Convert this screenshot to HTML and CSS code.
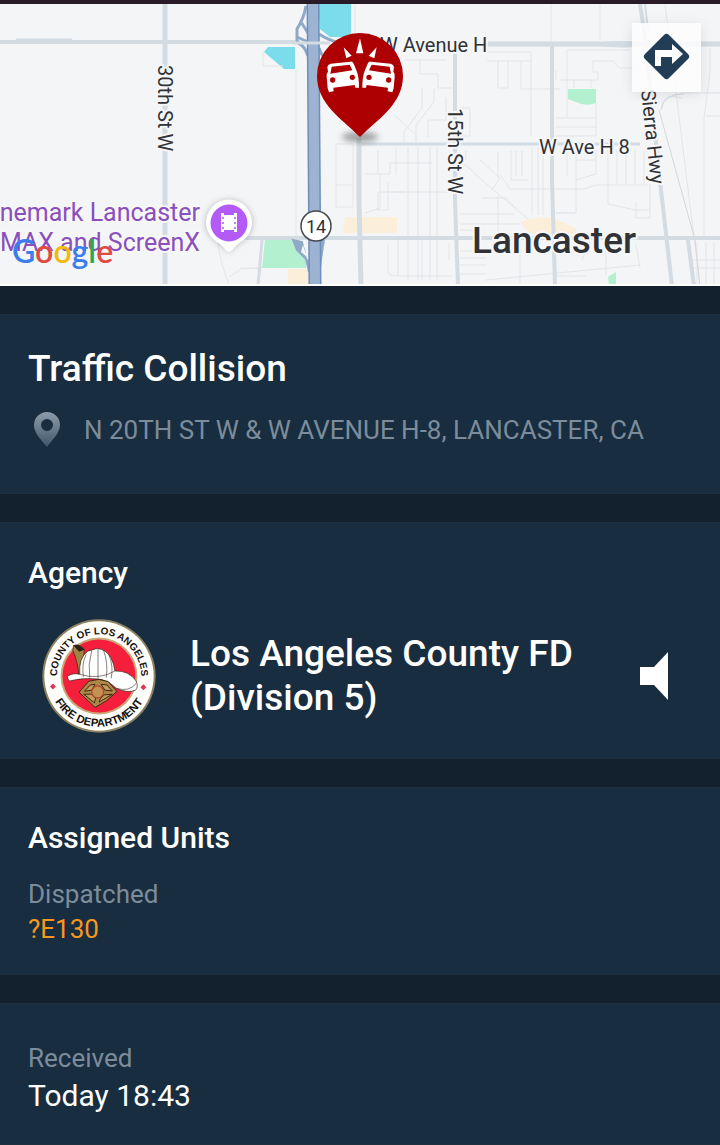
FILE: index.html
```html
<!DOCTYPE html>
<html lang="en">
<head>
<meta charset="utf-8">
<meta name="viewport" content="width=device-width, initial-scale=1">
<title>Traffic Collision</title>
<link rel="stylesheet" href="styles.css">
</head>
<body>
<main class="incident">
  <section class="map" aria-label="Incident map">
    <svg class="map-canvas" viewBox="0 4 720 282" role="img" aria-label="Map of Lancaster">
      <defs>
        <filter id="soft" x="-50%" y="-50%" width="200%" height="200%"><feGaussianBlur stdDeviation="3"/></filter>
      </defs>
      <rect y="4" width="720" height="282" fill="#f4f5f6"/>
      <!-- water, parks and commercial areas -->
      <path d="M318 4H351V32Q350 37 344 37H330L320 29Z" fill="#7bdcec"/>
      <path d="M268 47H295V69H284L264 52Z" fill="#7bdcec"/>
      <path d="M265 240H298L306 250V268H262Z" fill="#b2f0cf"/>
      <path d="M568 89H596V103Q586 107 576 102L568 99Z" fill="#b2f0cf"/>
      <path d="M608 277L616 272V286H609Z" fill="#b2f0cf"/>
      <path d="M345 217H397V233H343ZM288 269H310V286H288ZM520 222Q545 213 562 222L576 228V234H530Z" fill="#fbefda"/>
      <!-- side streets -->
      <g fill="none" stroke="#e2e5e9" stroke-width="1">
        <path d="M218 240Q219 260 229 284M229 277L241 269 260 268M240 268H262M296 70V236M263 52V66H283M355 4V38"/>
        <path d="M336 144H353V207M336 144V207H353M336 185H353M365 174H390V163H432M378 174V150M378 210V192H405M365 213 380 208V174M396 147V175M408 147V236M418 147V236M430 147V236M437 147V236M388 182V210H376M390 192H456"/>
        <path d="M405 60H446M420 60V74H438V88H454M422 88V108L404 132V144M434 88V102L416 125V142M394 115 415 134M446 97V120H428V138M458 108H470V136H448"/>
        <path d="M388 245V272Q389 276 397 276H452M398 240V276M408 240V280M418 240V280M422 240V280M430 240V280M437 240V280M449 243V260M460 251H486M460 258H486M460 265H486M460 274H486"/>
        <path d="M457 180V164Q463 160 477 176L528 219M480 160 500 178 492 190M466 150V160M498 152V178M511 150V180H528M516 150V176M522 150V176M532 147V215M538 147V215M543 147V215M500 175 510 189H584L595 185H648M482 198H506L516 209M460 214H514M460 224H520M460 230H475M498 196V236"/>
        <path d="M487 52H531M487 61H530M498 61V88H508V61M521 61V89H560M531 52V136M551 4V42M600 4V40M567 50V118M567 50H630M560 80H598V72H592M556 70V80M574 80V88M591 80V88M593 72V61H612L620 68H638M596 103V136M556 118H596M556 127H596M556 136H596"/>
        <path d="M567 150V176M576 150V213H556M576 180L596 174V150M576 160H596M608 150V204L635 210H650M617 150V184M626 150V184M635 150V184M644 150V184M650 184V218H636V202M576 213H556M486 280 640 265M520 243V286M556 276 586 276M588 245 582 260M606 245V275M636 245 640 268M665 4 700 286M710 48V72L704 118V240M704 93H720M680 93H720M661 108Q663 92 682 98M706 116H720M697 242V286M706 242V286M714 242V286M690 260H720M690 268H720"/>
      </g>
      <path d="M659 110L695 240 700 286M661 110Q664 93 684 94" fill="none" stroke="#d5d8dc" stroke-width="1"/>
      <!-- main streets -->
      <g fill="none" stroke="#d3dce3">
        <path d="M0 42H300" stroke-width="4"/>
        <path d="M16 41H72" stroke-width="5"/>
        <path d="M486 44H720" stroke-width="5"/>
        <path d="M590 44Q620 39 660 44Q620 50 590 44Z" fill="#d3dce3"/>
        <path d="M165 4V286" stroke-width="5"/>
        <path d="M222 238H720" stroke-width="4"/>
        <path d="M359 138V200L361 286" stroke-width="5"/>
        <path d="M359 144H640" stroke-width="3"/>
        <path d="M455 40V200L458 286" stroke-width="4"/>
        <path d="M552 46V180L555 286" stroke-width="4"/>
        <path d="M640 4L644 30L661 190L672 286" stroke-width="4"/>
        <path d="M645 4L648 30" stroke-width="2"/>
        <path d="M688 240L694 286" stroke-width="4"/>
        <path d="M262 240L258 286" stroke-width="3"/>
      </g>
      <!-- freeway with ramps -->
      <g fill="none" stroke="#91a9c9" stroke-width="3">
        <path d="M306 6Q304 18 297 29V42M297 37L308 42M301 22L308 33M319 34Q328 40 342 44M319 48Q322 58 332 66M298 43Q305 46 308 56"/>
        <path d="M293 240L302 242L309 272V262L297 250Z" fill="#91a9c9" stroke-width="2"/>
        <path d="M303 245L307 257L301 252Z" fill="#f4f5f6" stroke="none"/>
        <path d="M319 240H325Q322 258 320 276Z" fill="#91a9c9" stroke="none"/>
        <path d="M313 4L315 286" stroke="#6e8fbb" stroke-width="13"/>
        <path d="M313 4L315 286" stroke="#9cb3d2" stroke-width="10"/>
        <path d="M292 43H330" stroke="#d3dce3"/>
      </g>
      <!-- place and street names -->
      <g class="street">
        <text x="380" y="52">W Avenue H</text>
        <text x="539" y="154">W Ave H 8</text>
        <text transform="translate(158 65) rotate(90)">30th St W</text>
        <text transform="translate(448 108) rotate(90)">15th St W</text>
        <text transform="translate(641 90) rotate(84)">Sierra Hwy</text>
      </g>
      <text class="city" x="472" y="253">Lancaster</text>
      <g class="poi" text-anchor="end">
        <text x="200" y="221">nemark Lancaster</text>
        <text x="200" y="251">MAX and ScreenX</text>
      </g>
      <text class="brand" x="12" y="263"><tspan fill="#3b7ded">G</tspan><tspan fill="#e04a3f">o</tspan><tspan fill="#f2b90f">o</tspan><tspan fill="#3b7ded">g</tspan><tspan fill="#2da94f">l</tspan><tspan fill="#e04a3f">e</tspan></text>
      <!-- cinema marker -->
      <path d="M229 253C224 243 206 240 206 223A23 23 0 0 1 252 223C252 240 234 243 229 253Z" fill="#777" opacity=".5" filter="url(#soft)"/>
      <path d="M229 252Q227 252 224 248Q222 245 217 242A23 23 0 1 1 241 242Q236 245 234 248Q231 252 229 252Z" fill="#fff"/>
      <circle cx="229" cy="223" r="18.500" fill="#b45bf7"/>
      <path d="M221 213H224V215H234V213H237V232H234V230H224V232H221Z" fill="#fff"/>
      <path d="M223 217V219M223 222V224M223 227V229M235 217V219M235 222V224M235 227V229" stroke="#b45bf7" stroke-width="1.500"/>
      <!-- route shield -->
      <circle cx="316" cy="226" r="15" fill="#fff" stroke="#45494d" stroke-width="1.500"/>
      <text class="route" x="316" y="233" text-anchor="middle">14</text>
      <!-- incident marker -->
      <ellipse cx="360" cy="137" rx="18" ry="5" fill="#555" opacity=".55" filter="url(#soft)"/>
      <path d="M360 137C342 119 317 104 317 76A43 43 0 0 1 403 76C403 104 378 119 360 137Z" fill="#ad0003"/>
      <g transform="translate(300 20) scale(.33333)">
        <g id="car">
          <path d="M82 141Q83 133 92 131L151 125Q158 124 161 131L170 153Q177 170 177 203H166L164 195L100 203L101 214L87 217L83 205L80 170Q79 160 84 155Z" fill="#fff"/>
          <path d="M95 140L149 134L157 151L91 161Z" fill="#ad0003"/>
          <circle cx="98" cy="180" r="8" fill="#ad0003"/><circle cx="157" cy="172" r="8" fill="#ad0003"/>
        </g>
        <use href="#car" transform="translate(364 0) scale(-1 1)"/>
        <path d="M180 55L190 100H168ZM131 82L155 107L139 115ZM230 82L223 115L206 107Z" fill="#fff"/>
      </g>
      <path d="M0 285H720" stroke="#fff" stroke-width="2"/>
    </svg>
    <button class="directions" type="button" aria-label="Directions">
      <svg viewBox="0 0 69 69" width="69" height="69" aria-hidden="true">
        <path d="M32 12Q34.500 9.500 37 12L56 31Q58.500 33.500 56 36L37 55Q34.500 57.500 32 55L13 36Q10.500 33.500 13 31Z" fill="#213e56"/>
        <path d="M23 43V27H40V21L51 31L40 41V34H29V43Z" fill="#fff"/>
      </svg>
    </button>
  </section>

  <section class="card summary">
    <h1 class="title">Traffic Collision</h1>
    <p class="address">
      <svg class="place" viewBox="0 0 28 36" aria-hidden="true">
        <defs><linearGradient id="fade" x1="0" y1="0" x2="0" y2="1"><stop offset="0" stop-color="#8c9cab"/><stop offset="1" stop-color="#41566a"/></linearGradient></defs>
        <path fill="url(#fade)" fill-rule="evenodd" d="M15 0A13 13 0 0 1 28 13C28 21 20 28 15 35C9 28 2 21 2 13A13 13 0 0 1 15 0ZM15 7A6 6 0 1 0 15 19A6 6 0 1 0 15 7Z"/>
      </svg>
      <span>N 20TH ST W &amp; W AVENUE H-8, LANCASTER, CA</span>
    </p>
  </section>

  <section class="card agency">
    <h2 class="heading">Agency</h2>
    <div class="agency-row">
      <svg class="seal" viewBox="38 23 344 344" role="img" aria-label="Los Angeles County Fire Department seal">
        <defs>
          <path id="arc-top" d="M84 212A127 127 0 1 1 336 212"/>
          <path id="arc-bottom" d="M57 195A153 153 0 0 0 363 195"/>
        </defs>
        <circle cx="210" cy="195" r="171" fill="#8d8260"/>
        <circle cx="210" cy="195" r="165" fill="#fffefa"/>
        <circle cx="210" cy="195" r="116" fill="#c9a779"/>
        <circle cx="210" cy="195" r="110" fill="#f51f3c"/>
        <text class="seal-text"><textPath href="#arc-top" startOffset="50%" text-anchor="middle">COUNTY OF LOS ANGELES</textPath></text>
        <text class="seal-text seal-text-low"><textPath href="#arc-bottom" startOffset="50%" text-anchor="middle">FIRE DEPARTMENT</textPath></text>
        <path d="M71 218L80 227L71 236L62 227ZM344 220L353 229L344 238L335 229Z" fill="#e0345a"/>
        <!-- helmet -->
        <path d="M133 103Q150 96 166 114L158 192L150 200Q146 150 131 118Z" fill="#a08444" stroke="#2b2013" stroke-width="2"/>
        <path d="M133 103Q150 96 166 116L150 122Z" fill="#2b2013"/>
        <path d="M115 196Q130 184 152 190Q148 140 176 120L204 112Q232 114 246 140Q256 160 258 180Q300 178 322 210Q330 228 320 238Q296 248 262 232Q236 206 205 204Q160 200 122 210Q114 206 115 196Z" fill="#fff" stroke="#2b2013" stroke-width="2"/>
        <path d="M171 130Q157 160 163 198M188 118Q176 160 182 200M207 114V202M224 118Q238 156 232 200M240 132Q254 164 247 202M152 190Q210 208 258 180M262 232Q300 244 322 218" fill="none" stroke="#4a4137" stroke-width="2"/>
        <!-- badge -->
        <path d="M179 211L209 205L238 212L264 242L232 270L198 290L150 244Z" fill="#ae8748" stroke="#3a2814" stroke-width="3"/>
        <path d="M166 241L184 222L198 220L188 238ZM250 240L234 222L216 220L228 238ZM164 250L187 250L200 262L196 276ZM250 250L226 252L214 264L210 274Z" fill="#c49c5c" stroke="#3a2814" stroke-width="3"/>
        <circle cx="206" cy="243" r="18" fill="#c39253" stroke="#b4472d" stroke-width="4"/>
      </svg>
      <p class="agency-name">Los Angeles County FD (Division 5)</p>
      <button class="speaker" type="button" aria-label="Listen">
        <svg viewBox="0 0 28 48" width="28" height="48" aria-hidden="true"><path d="M0 15H14L28 0V48L14 33H0Z" fill="#fff"/></svg>
      </button>
    </div>
  </section>

  <section class="card units">
    <h2 class="heading">Assigned Units</h2>
    <p class="label">Dispatched</p>
    <p class="unit">?E130</p>
  </section>

  <section class="card received">
    <p class="label">Received</p>
    <p class="time">Today 18:43</p>
  </section>
</main>
</body>
</html>
```
FILE: styles.css
```css
* { box-sizing: border-box; }

body {
  margin: 0;
  background: #12212d;
  color: #fff;
  font-family: Roboto, "Liberation Sans", sans-serif;
}

h1, h2, p { margin: 0; font-weight: 400; }

button {
  display: block;
  padding: 0;
  border: 0;
  background: none;
  cursor: pointer;
}

svg { display: block; flex: none; }

.incident {
  display: flex;
  flex-direction: column;
  gap: 28px;
  border-top: 4px solid #281a27;
}

.map { position: relative; }
.map-canvas { width: 100%; height: auto; }

.street, .poi, .city {
  paint-order: stroke;
  stroke: #f6f7f8;
  stroke-width: 4px;
  stroke-linejoin: round;
}
.street { font-size: 20px; fill: #303236; }
.poi { font-size: 25px; fill: #8a4fbd; }
.city { font-size: 37px; font-weight: 500; fill: #303236; }
.route { font-size: 18px; fill: #303236; }
.brand { font-family: Lato, sans-serif; font-size: 32px; font-weight: 600; }

.directions {
  position: absolute;
  top: 19px;
  right: 19px;
  background: rgba(253, 253, 254, 0.85);
  box-shadow: 0 2px 12px rgba(0, 0, 0, 0.1);
}

.card {
  padding: 28px;
  background: #182d3f;
  border-top: 1px solid #1c3040;
  border-bottom: 1px solid #1c3040;
}

.title { font-size: 37px; line-height: 52px; font-weight: 500; }
.heading { font-size: 30px; line-height: 44px; font-weight: 500; }

.address {
  display: flex;
  align-items: center;
  gap: 24px;
  margin-top: 16px;
  padding-left: 4px;
  padding-bottom: 16px;
  color: #7c8c9b;
  font-size: 26px;
  line-height: 38px;
}
.place { width: 28px; height: 36px; }

.agency { padding-bottom: 25px; }
.agency-row {
  display: flex;
  align-items: center;
  gap: 34px;
  margin-top: 24px;
  padding: 0 24px 0 14px;
}
.seal { width: 114px; height: 114px; }
.seal-text { font: bold 30px "Liberation Sans", sans-serif; fill: #16120f; }
.seal-text-low { font-size: 34px; }
.agency-name { flex: 1; font-size: 37px; line-height: 44px; font-weight: 500; }

.label { color: #7c8c9b; font-size: 26px; line-height: 36px; }
.units .label { margin-top: 16px; }
.unit { color: #f7981d; font-size: 26px; line-height: 34px; }
.received { padding-top: 36px; }
.time { font-size: 30px; line-height: 40px; }
```
